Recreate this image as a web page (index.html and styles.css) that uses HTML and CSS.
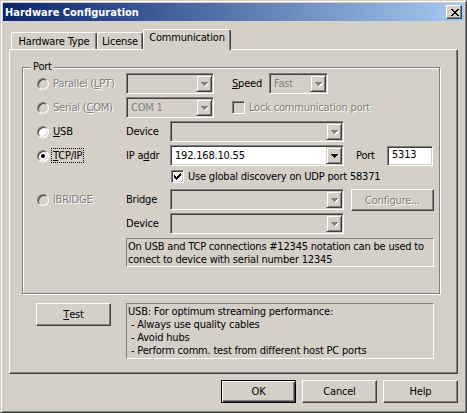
FILE: index.html
```html
<!DOCTYPE html>
<html lang="en">
<head>
    <meta charset="UTF-8">
    <title>Hardware Configuration</title>
    <link rel="stylesheet" href="styles.css">
</head>
<body>
    <div class="window">
        <div class="titlebar">
            <span class="title">Hardware Configuration</span>
            <div class="close">
                <svg width="8" height="7" viewBox="0 0 8 7"><path d="M0 0h2v1h-2zM6 0h2v1h-2zM1 1h2v1h-2zM5 1h2v1h-2zM2 2h4v1h-4zM3 3h2v1h-2zM2 4h4v1h-4zM1 5h2v1h-2zM5 5h2v1h-2zM0 6h2v1h-2zM6 6h2v1h-2z"/></svg>
            </div>
        </div>

        <div class="client">
            <!-- Pestañas -->
            <div class="tabs">
                <div class="tab tab-hw">Hardware Type</div>
                <div class="tab tab-lic">License</div>
                <div class="tab tab-comm active">Communication</div>
            </div>

            <div class="panel">
                <div class="group">
                    <span class="legend">Port</span>

                    <div class="row">
                        <div class="opt dis"><span class="radio"></span><span>Parallel (<u>L</u>PT)</span></div>
                        <div class="combo off w88"><span class="val"></span><span class="drop"><svg width="7" height="4" viewBox="0 0 7 4"><path d="M0 0h7v1h-1v1h-1v1h-1v1h-1v-1h-1v-1h-1v-1h-1z"/></svg></span></div>
                        <span class="lbl-speed"><u>S</u>peed</span>
                        <div class="combo off w59"><span class="val">Fast</span><span class="drop"><svg width="7" height="4" viewBox="0 0 7 4"><path d="M0 0h7v1h-1v1h-1v1h-1v1h-1v-1h-1v-1h-1v-1h-1z"/></svg></span></div>
                    </div>

                    <div class="row">
                        <div class="opt dis"><span class="radio"></span><span>Serial (<u>C</u>OM)</span></div>
                        <div class="combo off w88"><span class="val">COM 1</span><span class="drop"><svg width="7" height="4" viewBox="0 0 7 4"><path d="M0 0h7v1h-1v1h-1v1h-1v1h-1v-1h-1v-1h-1v-1h-1z"/></svg></span></div>
                        <div class="check dis lock"><span class="box"></span><span>Lock communication port</span></div>
                    </div>

                    <div class="row">
                        <div class="opt"><span class="radio on"></span><span><u>U</u>SB</span></div>
                        <span class="lbl">Device</span>
                        <div class="combo off w174"><span class="val"></span><span class="drop"><svg width="7" height="4" viewBox="0 0 7 4"><path d="M0 0h7v1h-1v1h-1v1h-1v1h-1v-1h-1v-1h-1v-1h-1z"/></svg></span></div>
                    </div>

                    <div class="row row-tcp">
                        <div class="opt"><span class="radio on checked"></span><span class="focus"><u>T</u>CP/IP</span></div>
                        <span class="lbl">IP a<u>d</u>dr</span>
                        <div class="combo w174"><span class="val">192.168.10.55</span><span class="drop"><svg width="7" height="4" viewBox="0 0 7 4"><path d="M0 0h7v1h-1v1h-1v1h-1v1h-1v-1h-1v-1h-1v-1h-1z"/></svg></span></div>
                        <span class="lbl-port">Port</span>
                        <div class="edit">5313</div>
                    </div>

                    <div class="row row-discovery">
                        <div class="check"><span class="box on"><svg width="7" height="7" viewBox="0 0 7 7"><path d="M6 0h1v1h-1zM5 1h2v1h-2zM0 2h1v1h-1zM4 2h3v1h-3zM0 3h2v1h-2zM3 3h3v1h-3zM0 4h5v1h-5zM1 5h3v1h-3zM2 6h1v1h-1z"/></svg></span><span>Use global discovery on UDP port 58371</span></div>
                    </div>

                    <div class="row row-bridge">
                        <div class="opt dis"><span class="radio"></span><span>iBRIDGE</span></div>
                        <span class="lbl">Bridge</span>
                        <div class="combo off w174"><span class="val"></span><span class="drop"><svg width="7" height="4" viewBox="0 0 7 4"><path d="M0 0h7v1h-1v1h-1v1h-1v1h-1v-1h-1v-1h-1v-1h-1z"/></svg></span></div>
                        <div class="btn btn-configure dis">Configure...</div>
                    </div>

                    <div class="row row-device">
                        <div class="opt"></div>
                        <span class="lbl">Device</span>
                        <div class="combo off w174"><span class="val"></span><span class="drop"><svg width="7" height="4" viewBox="0 0 7 4"><path d="M0 0h7v1h-1v1h-1v1h-1v1h-1v-1h-1v-1h-1v-1h-1z"/></svg></span></div>
                    </div>

                    <div class="note note-serial">On USB and TCP connections #12345 notation can be used to conect to device with serial number 12345</div>
                </div>

                <div class="test-row">
                    <div class="btn btn-test"><u>T</u>est</div>
                    <div class="note note-usb">USB: For optimum streaming performance:<br>&nbsp;- Always use quality cables<br>&nbsp;- Avoid hubs<br>&nbsp;- Perform comm. test from different host PC ports</div>
                </div>
            </div>

            <div class="actions">
                <div class="btn default">OK</div>
                <div class="btn">Cancel</div>
                <div class="btn">Help</div>
            </div>
        </div>
    </div>
</body>
</html>
```

FILE: styles.css
```css
/* Estilo general */
body {
    margin: 0;
    font-family: "DejaVu Sans Condensed", "Liberation Sans", sans-serif;
    font-size: 11px;
    letter-spacing: -0.2px;
    color: #000;
    background: #d4d0c8;
}

u {
    text-decoration-thickness: 1px;
    text-underline-offset: 1px;
}

/* Ventana */
.window {
    box-sizing: border-box;
    width: 467px;
    height: 413px;
    padding: 2px;
    background: #d4d0c8;
    border: 1px solid;
    border-color: #d4d0c8 #404040 #404040 #d4d0c8;
    box-shadow: inset 1px 1px #fff, inset -1px -1px #808080;
    display: flex;
    flex-direction: column;
}

.titlebar {
    height: 18px;
    display: flex;
    align-items: center;
    justify-content: space-between;
    padding: 0 2px;
    background: linear-gradient(to right, #0a246a, #a6caf0);
    color: #fff;
    font-weight: bold;
    letter-spacing: 0;
}

.close {
    box-sizing: border-box;
    width: 16px;
    height: 14px;
    display: flex;
    align-items: center;
    justify-content: center;
    background: #d4d0c8;
    border: 1px solid;
    border-color: #fff #404040 #404040 #fff;
    box-shadow: inset -1px -1px #808080;
}

.close svg {
    fill: #000;
    margin-left: 1px;
}

.client {
    flex: 1;
    padding: 8px 6px 0;
}

/* Pestañas */
.tabs {
    display: flex;
    align-items: flex-end;
    height: 20px;
    padding-left: 2px;
}

.tab {
    box-sizing: border-box;
    height: 17px;
    padding-top: 2px;
    text-align: center;
    border: 1px solid;
    border-bottom: none;
    border-color: #fff #404040 #404040 #fff;
    border-radius: 2px 3px 0 0;
    box-shadow: inset -1px 0 #808080;
}

.tab-hw { width: 86px; }
.tab-lic { width: 46px; }

.tab-comm {
    width: 88px;
}

.tab.active {
    height: 21px;
    margin-bottom: -1px;
    padding-top: 1px;
    position: relative;
    z-index: 1;
    background: #d4d0c8;
}

/* Panel */
.panel {
    box-sizing: border-box;
    height: 325px;
    padding: 17px 0 0 12px;
    border: 1px solid;
    border-color: #fff #404040 #404040 #fff;
    box-shadow: inset -1px -1px #808080;
}

.group {
    position: relative;
    box-sizing: border-box;
    width: 418px;
    padding: 5px 0 26px 14px;
    border: 1px solid #808080;
    box-shadow: 1px 1px #fff, inset 1px 1px #fff;
}

.legend {
    position: absolute;
    left: 8px;
    top: -8px;
    padding: 0 2px;
    background: #d4d0c8;
}

.row {
    display: flex;
    align-items: center;
    height: 21px;
    margin-bottom: 3px;
}

.row-tcp { margin-bottom: 0; }
.row-discovery { height: 20px; padding-left: 134px; }
.row-bridge { height: 22px; align-items: flex-start; margin-bottom: 2px; }
.row-device { margin-bottom: 4px; }

.dis {
    color: #808080;
    text-shadow: 1px 1px 0 #fff;
}

/* Opciones */
.opt {
    width: 89px;
    flex: none;
    display: flex;
    align-items: center;
    white-space: nowrap;
}

.row-bridge .opt { height: 21px; }

.radio {
    box-sizing: border-box;
    width: 12px;
    height: 12px;
    margin-right: 4px;
    border-radius: 50%;
    border: 1px solid;
    border-color: #808080 #fff #fff #808080;
    box-shadow: inset 1px 1px #404040, inset -1px -1px #d4d0c8;
    background: #d4d0c8;
    position: relative;
}

.radio.on { background: #fff; }

.radio.checked::after {
    content: "";
    position: absolute;
    left: 3px;
    top: 3px;
    width: 4px;
    height: 4px;
    border-radius: 50%;
    background: #000;
}

.focus {
    outline: 1px dotted #000;
    padding: 0 1px;
    margin-left: -1px;
}

.lbl {
    width: 44px;
    flex: none;
}

.row-bridge .lbl { line-height: 21px; }

.lbl-speed {
    margin-left: 18px;
    width: 37px;
}

.lbl-port {
    margin-left: 12px;
    width: 31px;
}

/* Combos */
.combo {
    box-sizing: border-box;
    height: 21px;
    display: flex;
    background: #fff;
    border: 1px solid;
    border-color: #808080 #fff #fff #808080;
    box-shadow: inset 1px 1px #404040, inset -1px -1px #d4d0c8;
    padding: 1px;
    flex: none;
}

.combo.off {
    background: #d4d0c8;
    color: #808080;
}

.w88 { width: 88px; }
.w59 { width: 59px; }
.w174 { width: 174px; }

.val {
    flex: 1;
    padding-left: 3px;
    line-height: 17px;
    white-space: nowrap;
}

.drop {
    box-sizing: border-box;
    width: 16px;
    height: 17px;
    display: flex;
    align-items: center;
    justify-content: center;
    background: #d4d0c8;
    border: 1px solid;
    border-color: #d4d0c8 #404040 #404040 #d4d0c8;
    box-shadow: inset 1px 1px #fff, inset -1px -1px #808080;
}

.drop svg { fill: #000; }

.combo.off .drop svg {
    fill: #808080;
    filter: drop-shadow(1px 1px 0 #fff);
}

.edit {
    box-sizing: border-box;
    width: 46px;
    height: 20px;
    padding-left: 4px;
    line-height: 16px;
    background: #fff;
    border: 1px solid;
    border-color: #808080 #fff #fff #808080;
    box-shadow: inset 1px 1px #404040, inset -1px -1px #d4d0c8;
}

/* Casillas */
.check {
    display: flex;
    align-items: center;
    white-space: nowrap;
}

.lock { margin-left: 18px; }

.box {
    box-sizing: border-box;
    width: 13px;
    height: 13px;
    margin-right: 4px;
    display: flex;
    align-items: center;
    justify-content: center;
    background: #d4d0c8;
    border: 1px solid;
    border-color: #808080 #fff #fff #808080;
    box-shadow: inset 1px 1px #404040, inset -1px -1px #d4d0c8;
}

.box.on { background: #fff; }

.box svg { fill: #000; }

/* Botones */
.btn {
    box-sizing: border-box;
    width: 75px;
    height: 23px;
    display: flex;
    align-items: center;
    justify-content: center;
    border: 1px solid;
    border-color: #fff #404040 #404040 #fff;
    box-shadow: inset -1px -1px #808080;
    flex: none;
}

.btn.default {
    border: 1px solid #000;
    box-shadow: inset 1px 1px #fff, inset -1px -1px #404040, inset -2px -2px #808080;
}

.btn-configure {
    width: 83px;
    height: 22px;
    margin-left: 7px;
}

.btn-test { margin-left: 14px; }

/* Notas */
.note {
    box-sizing: border-box;
    width: 308px;
    padding: 1px 0 0 1px;
    line-height: 13px;
    border: 1px solid;
    border-color: #808080 #fff #fff #808080;
}

.note-serial {
    height: 29px;
    margin-left: 89px;
}

.test-row {
    display: flex;
    align-items: flex-start;
    margin-top: 9px;
}

.note-usb {
    height: 56px;
    margin-left: 15px;
}

.actions {
    display: flex;
    justify-content: flex-end;
    gap: 6px;
    margin-top: 6px;
}
```
